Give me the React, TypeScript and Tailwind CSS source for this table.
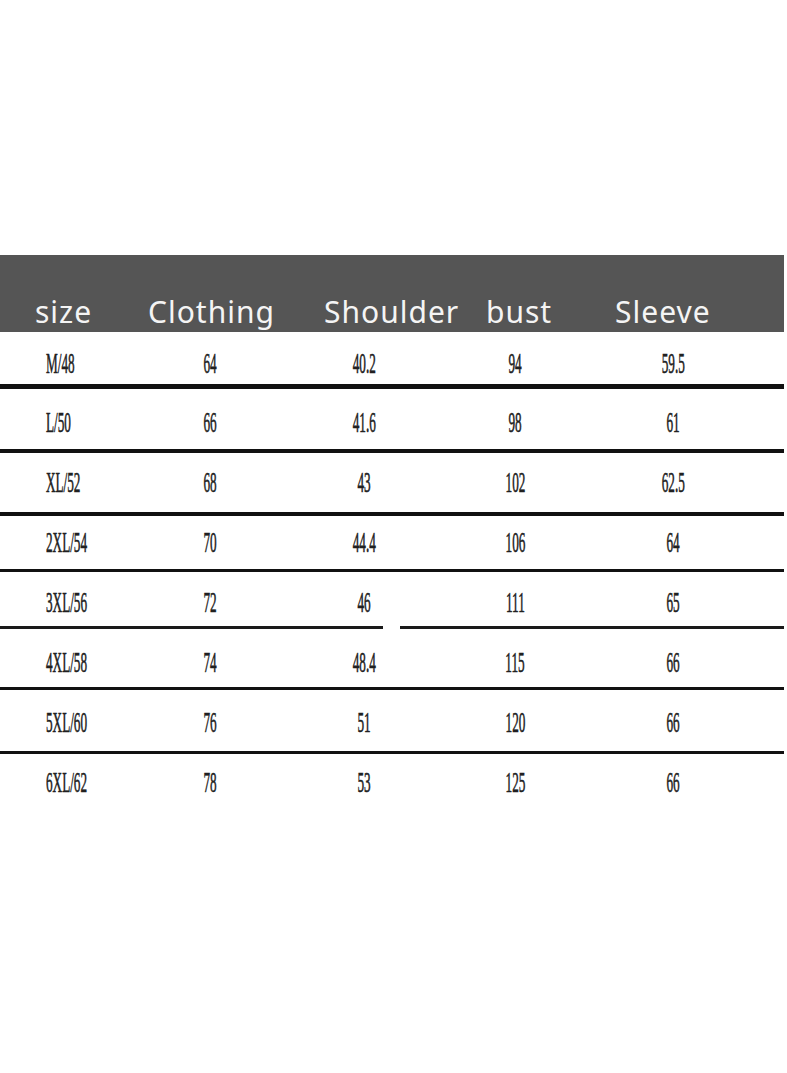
const headers = [
  { label: 'size', w: 'w-[113px]' },
  { label: 'Clothing', w: 'w-[176px]' },
  { label: 'Shoulder', w: 'w-[162px]' },
  { label: 'bust', w: 'w-[129px]' },
  { label: 'Sleeve', w: 'flex-1' },
]

// row height / text offset / separator below, measured from the chart
const rows = [
  { cells: ['M/48', '64', '40.2', '94', '59.5'], h: 'h-[52px]', pt: 'pt-[21px]', line: 'h-[5px]' },
  { cells: ['L/50', '66', '41.6', '98', '61'], h: 'h-[60px]', pt: 'pt-[23px]', line: 'h-[4px]' },
  { cells: ['XL/52', '68', '43', '102', '62.5'], h: 'h-[59px]', pt: 'pt-[19px]', line: 'h-[4px]' },
  { cells: ['2XL/54', '70', '44.4', '106', '64'], h: 'h-[53px]', pt: 'pt-[16px]', line: 'h-[3px]' },
  { cells: ['3XL/56', '72', '46', '111', '65'], h: 'h-[54px]', pt: 'pt-[20px]', line: 'split' },
  { cells: ['4XL/58', '74', '48.4', '115', '66'], h: 'h-[58px]', pt: 'pt-[23px]', line: 'h-[3px]' },
  { cells: ['5XL/60', '76', '51', '120', '66'], h: 'h-[61px]', pt: 'pt-[22px]', line: 'h-[3px]' },
  { cells: ['6XL/62', '78', '53', '125', '66'], h: 'h-[60px]', pt: 'pt-[18px]', line: '' },
]

function Cell({ text, first }: { text: string; first?: boolean }) {
  return (
    <div className={first ? 'flex justify-start pl-[46px]' : 'flex justify-center'}>
      <span
        className={`inline-block scale-x-[0.44] ${first ? 'origin-left' : 'origin-center'} text-[30px] leading-[20px] text-[#202020] whitespace-nowrap [-webkit-text-stroke:0.6px_#202020]`}
        style={{ fontFamily: '"Liberation Serif", serif' }}
      >
        {text}
      </span>
    </div>
  )
}

export default function App() {
  return (
    <div className="min-h-[1073px] w-[787px] bg-white pt-[255px]">
      <div className="w-[784px]">
        <div
          className="flex h-[77px] items-end bg-[#555555] pb-[5px] pl-[35px] text-[30px] leading-none tracking-[1px] text-[#f4f4f4]"
          style={{ fontFamily: '"Noto Sans", sans-serif' }}
        >
          {headers.map((h) => (
            <div key={h.label} className={h.w}>
              {h.label}
            </div>
          ))}
        </div>

        {rows.map((r, i) => (
          <div key={i}>
            <div className={`grid grid-cols-[130px_160px_148px_154px_162px_1fr] ${r.h} ${r.pt}`}>
              {r.cells.map((c, j) => (
                <Cell key={j} text={c} first={j === 0} />
              ))}
            </div>
            {r.line === 'split' ? (
              <div className="flex h-[3px]">
                <div className="w-[383px] bg-[#1a1a1a]" />
                <div className="w-[17px]" />
                <div className="flex-1 bg-[#1a1a1a]" />
              </div>
            ) : r.line ? (
              <div className={`${r.line} bg-[#111111]`} />
            ) : null}
          </div>
        ))}
      </div>
    </div>
  )
}
